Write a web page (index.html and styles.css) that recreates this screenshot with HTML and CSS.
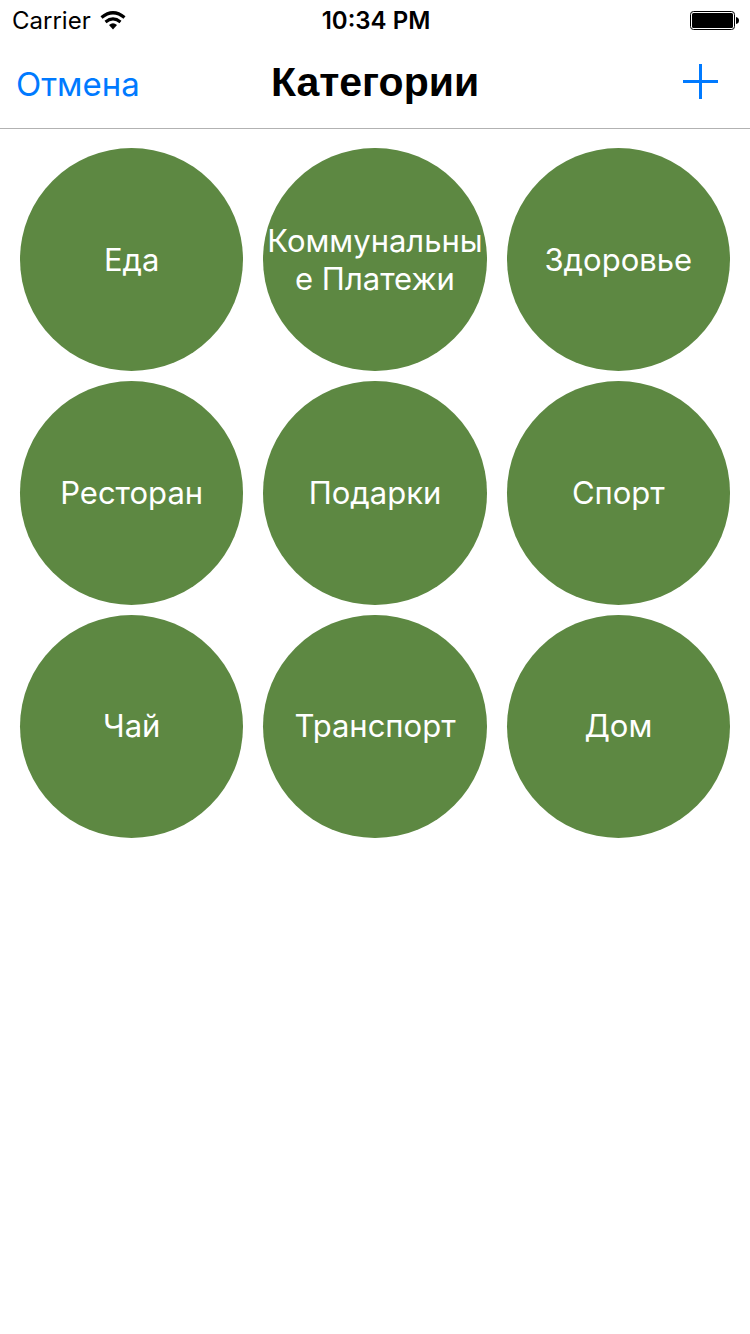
FILE: index.html
```html
<!DOCTYPE html>
<html lang="ru">
<head>
<meta charset="utf-8">
<meta name="viewport" content="width=device-width, initial-scale=1">
<title>Категории</title>
<link rel="stylesheet" href="styles.css">
</head>
<body>
<header class="top">
  <div class="status">
    <div class="status-left">
      <span>Carrier</span>
      <svg class="wifi" width="26" height="20" viewBox="0 0 26 20" aria-hidden="true">
        <path d="M1.500 6.500Q13 -3 24.500 6.500" fill="none" stroke="#000" stroke-width="3.200"/>
        <path d="M5.500 11Q13 4.800 20.500 11" fill="none" stroke="#000" stroke-width="3"/>
        <path d="M9 14Q13 10.500 17 14L13 18.500Z"/>
      </svg>
    </div>
    <time class="clock">10:34 PM</time>
    <svg class="battery" width="50" height="20" viewBox="0 0 50 20" aria-hidden="true">
      <rect x=".5" y=".5" width="44" height="18" rx="3" fill="#fff" stroke="#000"/>
      <rect x="2" y="2" width="41" height="15" rx="1.500"/>
      <path d="M46 6Q49 6.500 49 9.500Q49 12.500 46 13Z"/>
    </svg>
  </div>
  <nav class="nav">
    <button class="cancel" type="button">Отмена</button>
    <h1 class="title">Категории</h1>
    <button class="add" type="button" aria-label="Добавить">
      <svg width="35" height="35" viewBox="0 0 35 35" aria-hidden="true">
        <path d="M0 17.500H35M17.500 0V35" stroke="#007aff" stroke-width="3"/>
      </svg>
    </button>
  </nav>
</header>
<main class="grid">
  <button class="category" type="button">Еда</button>
  <button class="category" type="button">Коммунальные Платежи</button>
  <button class="category" type="button">Здоровье</button>
  <button class="category" type="button">Ресторан</button>
  <button class="category" type="button">Подарки</button>
  <button class="category" type="button">Спорт</button>
  <button class="category" type="button">Чай</button>
  <button class="category" type="button">Транспорт</button>
  <button class="category" type="button">Дом</button>
</main>
</body>
</html>
```

FILE: styles.css
```css
* {
  box-sizing: border-box;
}

body {
  margin: 0;
  background: #fff;
  color: #000;
  font-family: Inter, "Liberation Sans", sans-serif;
}

button {
  margin: 0;
  padding: 0;
  border: 0;
  background: none;
  font: inherit;
  cursor: pointer;
}

svg {
  display: block;
}

.top {
  border-bottom: 1px solid #b2b2b2;
}

.status,
.nav {
  display: grid;
  grid-template-columns: 1fr auto 1fr;
  align-items: center;
}

.status {
  height: 42px;
  padding: 0 10px 0 12px;
  font-size: 24px;
  line-height: 42px;
}

.status-left {
  display: flex;
  align-items: center;
  gap: 9px;
}

.clock {
  font-weight: 600;
}

.battery {
  justify-self: end;
}

.nav {
  height: 86px;
  padding: 0 16px 8px;
}

.cancel {
  justify-self: start;
  padding-top: 6px;
  color: #007aff;
  font-size: 33px;
  line-height: 40px;
}

.title {
  margin: 0;
  padding-top: 2px;
  font-family: "Liberation Sans", Arial, sans-serif;
  font-size: 41px;
  font-weight: 700;
  line-height: 48px;
}

.add {
  justify-self: end;
  margin-right: 16px;
}

.grid {
  display: grid;
  grid-template-columns: repeat(3, 1fr);
  gap: 10px 20px;
  padding: 19px 20px;
}

.category {
  aspect-ratio: 1;
  min-width: 0;
  border-radius: 50%;
  background: #5d8842;
  color: #fff;
  font-size: 31px;
  line-height: 38px;
  overflow-wrap: anywhere;
}
```
